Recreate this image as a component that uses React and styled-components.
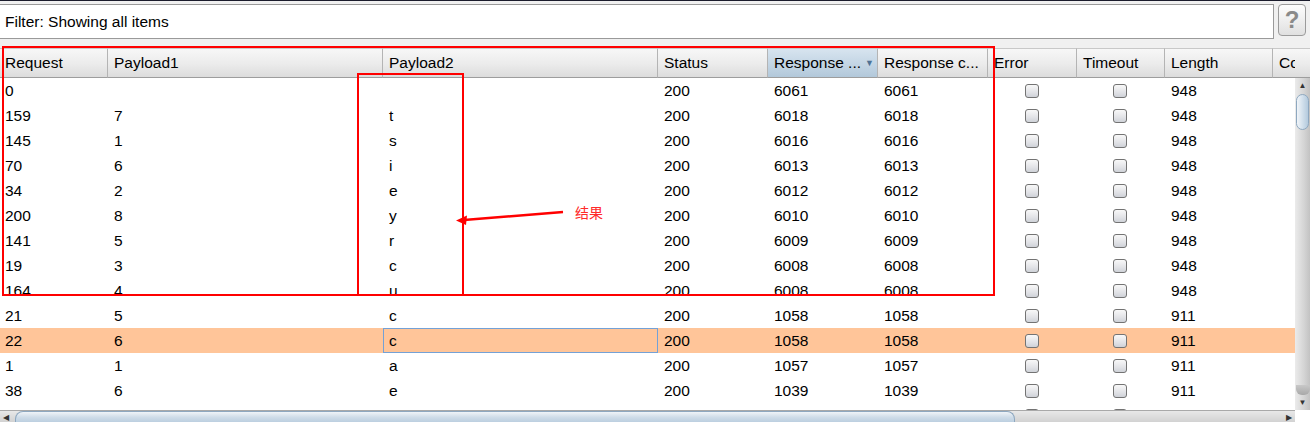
import React from 'react';
import styled, { createGlobalStyle, css } from 'styled-components';

const GlobalStyle = createGlobalStyle`
  html, body { margin: 0; padding: 0; background: #f0f0f0; }
  body { font-family: "Liberation Sans", Arial, sans-serif; overflow: hidden; }
  * { box-sizing: border-box; }
`;

const COLS = [
  { key: 'req', label: 'Request', w: 108 },
  { key: 'p1', label: 'Payload1', w: 275 },
  { key: 'p2', label: 'Payload2', w: 275 },
  { key: 'status', label: 'Status', w: 110 },
  { key: 'len1', label: 'Response ...', w: 110, sorted: true },
  { key: 'len2', label: 'Response c...', w: 110 },
  { key: 'error', label: 'Error', w: 89, check: true },
  { key: 'timeout', label: 'Timeout', w: 88, check: true },
  { key: 'length', label: 'Length', w: 108 },
  { key: 'comment', label: 'Comment', w: 110 },
];
const TEMPLATE = COLS.map((c) => `${c.w}px`).join(' ');

const DATA = [
  ['0', '', '', '200', '6061', '6061', '948'],
  ['159', '7', 't', '200', '6018', '6018', '948'],
  ['145', '1', 's', '200', '6016', '6016', '948'],
  ['70', '6', 'i', '200', '6013', '6013', '948'],
  ['34', '2', 'e', '200', '6012', '6012', '948'],
  ['200', '8', 'y', '200', '6010', '6010', '948'],
  ['141', '5', 'r', '200', '6009', '6009', '948'],
  ['19', '3', 'c', '200', '6008', '6008', '948'],
  ['164', '4', 'u', '200', '6008', '6008', '948'],
  ['21', '5', 'c', '200', '1058', '1058', '911'],
  ['22', '6', 'c', '200', '1058', '1058', '911'],
  ['1', '1', 'a', '200', '1057', '1057', '911'],
  ['38', '6', 'e', '200', '1039', '1039', '911'],
  ['28', '7', 'o', '200', '1038', '1038', '911'],
];
const SELECTED = 10;

const Page = styled.div`
  position: relative;
  width: 1310px;
  height: 422px;
  overflow: hidden;
  border-top: 1px solid #1b1c2c;
  background: #f0f0f0;
  display: flex;
  flex-direction: column;
`;

const FilterBar = styled.div`
  display: flex;
  gap: 4px;
  padding: 3px 4px 0 0;
  height: 38px;
`;

const FilterInput = styled.div`
  flex: 1;
  height: 35px;
  margin-left: -1px;
  background: #fff;
  border: 1px solid #9a9a9a;
  display: flex;
  align-items: center;
  padding-left: 5px;
  font-size: 15.5px;
  color: #000;
`;

const HelpButton = styled.div`
  width: 28px;
  height: 32px;
  border: 1px solid #9b9b9b;
  border-radius: 4px;
  background: linear-gradient(#fdfdfd, #ececec 60%, #e0e0e0);
  display: flex;
  align-items: center;
  justify-content: center;
  color: #8a8a8a;
  font-size: 24px;
  font-weight: bold;
  font-family: "Liberation Sans", Arial, sans-serif;
`;

const TableArea = styled.div`
  margin-top: 9px;
  display: grid;
  grid-template-columns: 1295px 15px;
  grid-template-rows: 30px 332px 12px;
  background: #fff;
`;

const HeaderViewport = styled.div`
  overflow: hidden;
`;

const HeaderRow = styled.div`
  display: grid;
  grid-template-columns: ${TEMPLATE};
  height: 30px;
`;

const headerBg = css`
  background: linear-gradient(#f7f7f7, #ebebeb 55%, #dcdcdc);
  border-top: 1px solid #c8c8c8;
  border-bottom: 1px solid #9d9d9d;
`;

const HeaderCell = styled.div`
  ${headerBg}
  border-right: 1px solid #b4b4b4;
  display: flex;
  align-items: center;
  justify-content: space-between;
  padding: 0 3px 1px ${(p) => (p.$first ? 5 : 6)}px;
  font-size: 15.5px;
  color: #000;
  white-space: nowrap;
  overflow: hidden;
  ${(p) =>
    p.$sorted &&
    css`
      background: linear-gradient(#d7e4ef, #c3d5e4 55%, #b2c8da);
    `}
`;

const SortArrow = styled.span`
  font-size: 9px;
  color: #4f7294;
`;

const HeaderCorner = styled.div`
  ${headerBg}
`;

const BodyViewport = styled.div`
  overflow: hidden;
  background: #fff;
`;

const Row = styled.div`
  display: grid;
  grid-template-columns: ${TEMPLATE};
  height: 25px;
  background: ${(p) => (p.$selected ? '#ffc599' : '#fff')};
`;

const Cell = styled.div`
  display: flex;
  align-items: center;
  justify-content: ${(p) => (p.$center ? 'center' : 'flex-start')};
  padding-left: ${(p) => (p.$center ? 0 : p.$first ? 4 : 5)}px;
  font-size: 15.5px;
  color: #000;
  white-space: nowrap;
  overflow: hidden;
  border: 1px solid ${(p) => (p.$focused ? '#74a1d6' : 'transparent')};
`;

const CheckBox = styled.span`
  display: inline-block;
  width: 14px;
  height: 14px;
  border: 1px solid #737373;
  border-radius: 3px;
  background: linear-gradient(#f8f8f8, #e2e3e7 60%, #cfd2d8);
  margin-left: -2px;
`;

const VScroll = styled.div`
  display: flex;
  flex-direction: column;
  background: linear-gradient(to right, #ebebeb, #d4d4d4 60%, #c2c2c2);
`;

const ArrowBtn = styled.div`
  height: ${(p) => p.$h || 15}px;
  width: ${(p) => p.$w || 15}px;
  display: flex;
  align-items: center;
  justify-content: center;
  font-size: 8px;
  color: #333;
`;

const VTrack = styled.div`
  flex: 1;
  display: flex;
  flex-direction: column;
  padding-top: 1px;
`;

const VThumb = styled.div`
  height: 36px;
  margin: 0 1px;
  border-radius: 8px;
  border: 1px solid #8ea8c0;
  background: linear-gradient(to right, #f1f5f9, #d2e0ec 50%, #b4cadd);
`;

const VTrackEnd = styled.div`
  margin-top: auto;
  height: 10px;
  background: linear-gradient(#c8c8c8, #a8a8a8);
  border-radius: 0 0 6px 6px;
  margin-left: 1px;
`;

const HScroll = styled.div`
  display: flex;
  align-items: stretch;
  background: linear-gradient(#e8e8e8, #d2d2d2);
  border-top: 1px solid #a9a9a9;
`;

const HThumb = styled.div`
  width: 1000px;
  margin-left: 3px;
  border-radius: 8px 8px 0 0;
  border: 1px solid #8ea8c0;
  border-bottom: none;
  background: linear-gradient(#f0f4f8, #d0dde9 50%, #bccfe0);
`;

const HTrack = styled.div`
  flex: 1;
`;

const Corner = styled.div`
  background: #fff;
`;

const Overlay = styled.svg`
  position: absolute;
  left: 0;
  top: 0;
  pointer-events: none;
`;

const Note = styled.span`
  position: absolute;
  left: 575px;
  top: 203px;
  font-family: "Noto Sans CJK SC", "Liberation Sans", sans-serif;
  font-size: 14px;
  line-height: 16px;
  color: #ff2a2a;
`;

export default function App() {
  return (
    <>
      <GlobalStyle />
      <Page>
        <FilterBar>
          <FilterInput>Filter: Showing all items</FilterInput>
          <HelpButton>?</HelpButton>
        </FilterBar>
        <TableArea>
          <HeaderViewport>
            <HeaderRow>
              {COLS.map((c, i) => (
                <HeaderCell key={c.key} $sorted={c.sorted} $first={i === 0}>
                  <span>{c.label}</span>
                  {c.sorted && <SortArrow>▼</SortArrow>}
                </HeaderCell>
              ))}
            </HeaderRow>
          </HeaderViewport>
          <HeaderCorner />
          <BodyViewport>
            {DATA.map((r, i) => (
              <Row key={i} $selected={i === SELECTED}>
                <Cell $first>{r[0]}</Cell>
                <Cell>{r[1]}</Cell>
                <Cell $focused={i === SELECTED}>{r[2]}</Cell>
                <Cell>{r[3]}</Cell>
                <Cell>{r[4]}</Cell>
                <Cell>{r[5]}</Cell>
                <Cell $center><CheckBox /></Cell>
                <Cell $center><CheckBox /></Cell>
                <Cell>{r[6]}</Cell>
                <Cell />
              </Row>
            ))}
          </BodyViewport>
          <VScroll>
            <ArrowBtn>▲</ArrowBtn>
            <VTrack>
              <VThumb />
              <VTrackEnd />
            </VTrack>
            <ArrowBtn>▼</ArrowBtn>
          </VScroll>
          <HScroll>
            <ArrowBtn $w={12} $h={12}>◀</ArrowBtn>
            <HThumb />
            <HTrack />
            <ArrowBtn $w={12} $h={12}>▶</ArrowBtn>
          </HScroll>
          <Corner />
        </TableArea>
        <Overlay width="1310" height="422">
          <rect x="3" y="46" width="991" height="248" fill="none" stroke="#ff0000" strokeWidth="2" />
          <rect x="358" y="73" width="105" height="221" fill="none" stroke="#ff0000" strokeWidth="2" />
          <line x1="563" y1="211" x2="464" y2="219" stroke="#ff0000" strokeWidth="2.5" />
          <polygon points="456,219.5 467,214.5 466,224" fill="#ff0000" />
        </Overlay>
        <Note>结果</Note>
      </Page>
    </>
  );
}
